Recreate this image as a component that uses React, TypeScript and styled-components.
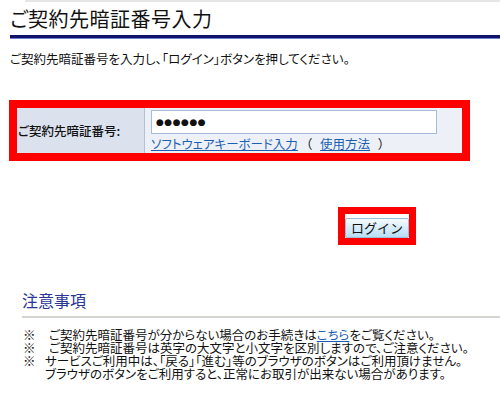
import React from 'react'
import styled, { createGlobalStyle } from 'styled-components'

const GlobalStyle = createGlobalStyle`
  body {
    margin: 0;
    background: #ffffff;
    font-family: "Noto Sans CJK JP", "Liberation Sans", sans-serif;
    color: #000000;
  }
`

const notes = [
  { mark: '※', text: ['ご契約先暗証番号が分からない場合のお手続きは', 'こちら', 'をご覧ください。'], indent: true },
  { mark: '※', text: ['ご契約先暗証番号は英字の大文字と小文字を区別しますので、ご注意ください。'], indent: true },
  {
    mark: '※',
    text: ['サービスご利用中は、「戻る」「進む」等のブラウザのボタンはご利用頂けません。'],
    indent: false,
  },
  { mark: '', text: ['ブラウザのボタンをご利用すると、正常にお取引が出来ない場合があります。'], indent: false },
]

const App: React.FC = () => {
  return (
    <Page>
      <GlobalStyle />
      <TopRule />
      <Title>ご契約先暗証番号入力</Title>
      <Lead>ご契約先暗証番号を入力し、「ログイン」ボタンを押してください。</Lead>

      <FormBox>
        <LabelCell>ご契約先暗証番号:</LabelCell>
        <InputCell>
          <PinInput type="text" defaultValue="●●●●●●" readOnly />
          <LinkRow>
            <Link href="#">ソフトウェアキーボード入力</Link>
            <Paren>（</Paren>
            <Link href="#">使用方法</Link>
            <Paren>）</Paren>
          </LinkRow>
        </InputCell>
      </FormBox>

      <ButtonRow>
        <ButtonFrame>
          <LoginButton>ログイン</LoginButton>
        </ButtonFrame>
      </ButtonRow>

      <NoteHeading>注意事項</NoteHeading>
      <NoteList>
        {notes.map((n, i) => (
          <NoteItem key={i}>
            <Mark>{n.mark}</Mark>
            <NoteText $indent={n.indent}>
              {n.text.length === 3 ? (
                <>
                  {n.text[0]}
                  <Link href="#">{n.text[1]}</Link>
                  {n.text[2]}
                </>
              ) : (
                n.text[0]
              )}
            </NoteText>
          </NoteItem>
        ))}
      </NoteList>
    </Page>
  )
}

export default App

const Page = styled.div`
  width: 500px;
  height: 419px;
  overflow: hidden;
  font-feature-settings: 'palt';
`

const TopRule = styled.div`
  height: 2px;
  margin-left: 25px;
  background: #e6e6e6;
`

const Title = styled.h1`
  margin: 0 0 0 10px;
  padding: 3px 0 3px 0;
  height: 27px;
  font-size: 20px;
  font-weight: normal;
  line-height: 27px;
  color: #111111;
  letter-spacing: 0.5px;
  border-bottom: 3px solid #12126a;
  box-shadow: 0 1px 0 #7080d0;
`

const Lead = styled.p`
  margin: 14px 0 0 10px;
  font-size: 12.5px;
  line-height: 14px;
  color: #111111;
`

const FormBox = styled.div`
  display: flex;
  margin: 34px 0 0 9px;
  width: 445px;
  height: 45px;
  border: 8px solid #ff0000;
`

const LabelCell = styled.div`
  display: flex;
  align-items: center;
  width: 126px;
  padding-left: 1px;
  background: #dbe2ee;
  border-right: 1px solid #b4c0d6;
  font-size: 12.5px;
  font-weight: 500;
  color: #111111;
`

const InputCell = styled.div`
  flex: 1;
  display: flex;
  flex-direction: column;
  padding: 2px 0 0 6px;
  background: #edf1f7;
`

const PinInput = styled.input`
  box-sizing: border-box;
  width: 286px;
  height: 24px;
  margin: 0;
  padding: 0 4px;
  border: 1px solid #a5bddb;
  background: #ffffff;
  font-family: "DejaVu Sans", sans-serif;
  font-size: 9px;
  font-weight: bold;
  letter-spacing: 0.5px;
  color: #111111;
  outline: none;
`

const LinkRow = styled.div`
  display: flex;
  align-items: center;
  margin-top: 3px;
  font-size: 12.5px;
  line-height: 14px;
`

const Link = styled.a`
  color: #1a5fb4;
  text-decoration: underline;
`

const Paren = styled.span`
  margin: 0 8px;
  color: #111111;
`

const ButtonRow = styled.div`
  display: flex;
  margin: 46px 0 0 338px;
`

const ButtonFrame = styled.div`
  border: 7px solid #ff0000;
  background: #ffffff;
`

const LoginButton = styled.button`
  width: 64px;
  height: 20px;
  margin: 0;
  padding: 0;
  border: 1px solid #9bbfd8;
  border-radius: 2px;
  background: linear-gradient(#f4fbff, #b7def4);
  font-family: "Noto Sans CJK JP", sans-serif;
  font-size: 13px;
  line-height: 18px;
  color: #111111;
`

const NoteHeading = styled.h2`
  margin: 45px 0 0 22px;
  padding-bottom: 6px;
  font-size: 16px;
  font-weight: normal;
  line-height: 20px;
  color: #2a3596;
  border-bottom: 2px solid #d6d6d0;
`

const NoteList = styled.ul`
  list-style: none;
  margin: 10px 0 0 23px;
  padding: 0;
  font-size: 12.5px;
  line-height: 13px;
  color: #111111;
`

const NoteItem = styled.li`
  display: flex;
`

const Mark = styled.span`
  width: 22px;
`

const NoteText = styled.span<{ $indent: boolean }>`
  padding-left: ${p => (p.$indent ? '4px' : '0')};
  white-space: nowrap;
`
